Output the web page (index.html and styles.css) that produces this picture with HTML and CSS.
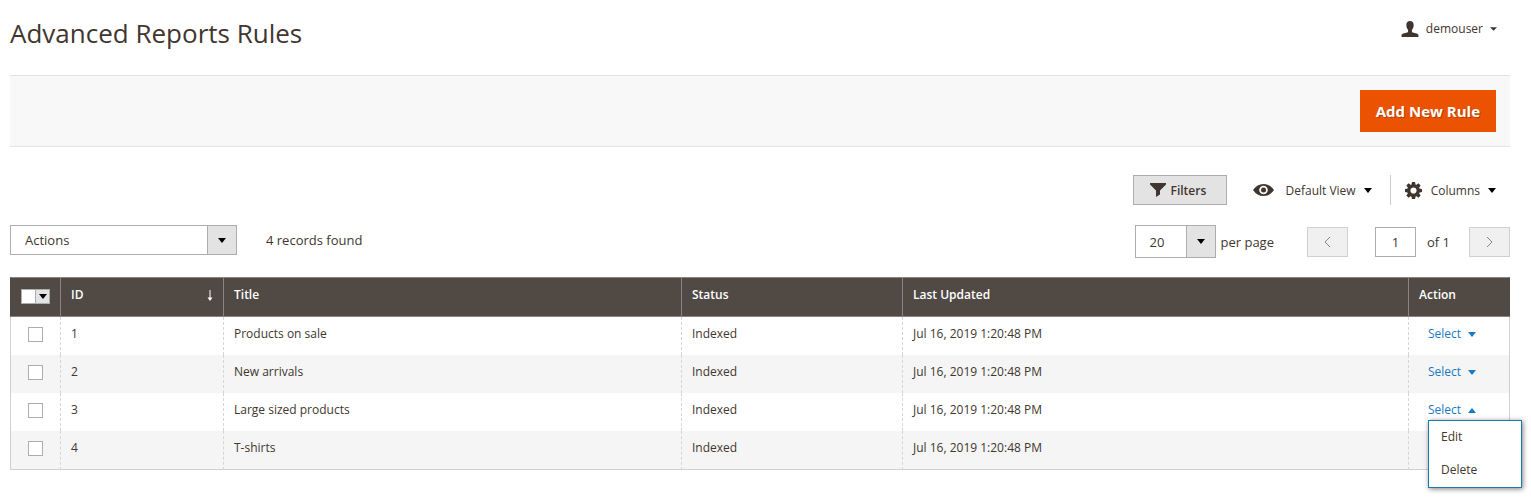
FILE: index.html
```html
<!DOCTYPE html>
<html lang="en">
<head>
    <meta charset="UTF-8">
    <meta name="viewport" content="width=device-width, initial-scale=1.0">
    <title>Advanced Reports Rules</title>
    <link rel="stylesheet" href="styles.css">
</head>
<body>
    <div class="page">
        <header class="page-header">
            <h1>Advanced Reports Rules</h1>
            <button type="button" class="user-menu">
                <svg class="icon-user" viewBox="0 0 18 17" width="18" height="16"><path d="M9 0C6.300 0 5 1.800 5.100 4.300C5.100 6.700 6 8.400 6.900 9.300V11.300C6.600 12.500 1.500 12.700.4 14.200C0 14.800 0 16 0 17H18C18 16 18 14.800 17.600 14.200C16.500 12.700 11.400 12.500 11.100 11.300V9.300C12 8.400 12.900 6.700 12.900 4.300C13 1.800 11.700 0 9 0Z"/></svg>
                <span>demouser</span>
                <svg class="caret-small" viewBox="0 0 8 4" width="7" height="4"><path d="M0 0H8L4 4Z"/></svg>
            </button>
        </header>

        <div class="page-actions">
            <button type="button" class="btn-primary">Add New Rule</button>
        </div>

        <div class="grid-tools">
            <button type="button" class="btn-filters">
                <svg viewBox="0 0 16 14" width="16" height="14"><path d="M0 0H16V1.500L10 7.500V11.500L6 14V7.500L0 1.500Z"/></svg>
                <span>Filters</span>
            </button>
            <button type="button" class="tool view-tool">
                <svg viewBox="0 0 21 12" width="21" height="12"><path fill-rule="evenodd" d="M0 6Q4 0 10.500 0T21 6Q17 12 10.500 12T0 6ZM10.500 1.700A4.300 4.300 0 1 0 10.500 10.300A4.300 4.300 0 1 0 10.500 1.700Z"/><circle cx="10.500" cy="6" r="2.500"/></svg>
                <span>Default View</span>
                <svg class="caret" viewBox="0 0 8 5" width="8" height="5"><path d="M0 0H8L4 5Z"/></svg>
            </button>
            <button type="button" class="tool columns-tool">
                <svg viewBox="-8 -8 16 16" width="17" height="17">
                    <circle r="4.400" fill="none" stroke="#41362f" stroke-width="3"/>
                    <path d="M-2 -5L-1.500 -8H1.500L2 -5ZM-2 5L-1.500 8H1.500L2 5ZM-5 -2L-8 -1.500V1.500L-5 2ZM5 -2L8 -1.500V1.500L5 2Z"/>
                    <path transform="rotate(45)" d="M-2 -5L-1.500 -8H1.500L2 -5ZM-2 5L-1.500 8H1.500L2 5ZM-5 -2L-8 -1.500V1.500L-5 2ZM5 -2L8 -1.500V1.500L5 2Z"/>
                </svg>
                <span>Columns</span>
                <svg class="caret" viewBox="0 0 8 5" width="8" height="5"><path d="M0 0H8L4 5Z"/></svg>
            </button>
        </div>

        <div class="grid-controls">
            <select class="select actions-select" aria-label="Actions">
                <option>Actions</option>
                <option>Delete</option>
            </select>
            <span class="records">4 records found</span>
            <div class="pager">
                <select class="select limit-select" id="per-page">
                    <option>20</option>
                    <option>50</option>
                    <option>100</option>
                </select>
                <label class="per-page" for="per-page">per page</label>
                <button type="button" class="btn-page" aria-label="Previous page" disabled>
                    <svg viewBox="0 0 7 12" width="7" height="12"><path d="M6 1L1 6L6 11"/></svg>
                </button>
                <input type="text" class="page-input" id="page" value="1">
                <label class="page-total" for="page">of 1</label>
                <button type="button" class="btn-page" aria-label="Next page" disabled>
                    <svg viewBox="0 0 7 12" width="7" height="12"><path d="M1 1L6 6L1 11"/></svg>
                </button>
            </div>
        </div>

        <table class="data-grid">
            <colgroup>
                <col class="col-check">
                <col class="col-id">
                <col class="col-title">
                <col class="col-status">
                <col class="col-updated">
                <col class="col-action">
            </colgroup>
            <thead>
                <tr>
                    <th class="check-cell">
                        <div class="multicheck">
                            <input type="checkbox" aria-label="Select all">
                            <button type="button" aria-label="Selection options"><svg viewBox="0 0 8 5" width="8" height="5"><path d="M0 0H8L4 5Z"/></svg></button>
                        </div>
                    </th>
                    <th>
                        <div class="sorted">
                            <span>ID</span>
                            <svg viewBox="0 0 6 11" width="6" height="11"><path d="M2.500 0H3.500V7.500H5.500L3 11L.5 7.500H2.500Z"/></svg>
                        </div>
                    </th>
                    <th>Title</th>
                    <th>Status</th>
                    <th>Last Updated</th>
                    <th>Action</th>
                </tr>
            </thead>
            <tbody>
                <tr>
                    <td class="check-cell"><input type="checkbox" aria-label="Select rule 1"></td>
                    <td>1</td>
                    <td>Products on sale</td>
                    <td>Indexed</td>
                    <td>Jul 16, 2019 1:20:48 PM</td>
                    <td class="action-cell"><button type="button" class="action-select">Select <svg viewBox="0 0 8 5" width="8" height="5"><path d="M0 0H8L4 5Z"/></svg></button></td>
                </tr>
                <tr>
                    <td class="check-cell"><input type="checkbox" aria-label="Select rule 2"></td>
                    <td>2</td>
                    <td>New arrivals</td>
                    <td>Indexed</td>
                    <td>Jul 16, 2019 1:20:48 PM</td>
                    <td class="action-cell"><button type="button" class="action-select">Select <svg viewBox="0 0 8 5" width="8" height="5"><path d="M0 0H8L4 5Z"/></svg></button></td>
                </tr>
                <tr>
                    <td class="check-cell"><input type="checkbox" aria-label="Select rule 3"></td>
                    <td>3</td>
                    <td>Large sized products</td>
                    <td>Indexed</td>
                    <td>Jul 16, 2019 1:20:48 PM</td>
                    <td class="action-cell">
                        <div class="action-wrap">
                            <button type="button" class="action-select" aria-expanded="true">Select <svg viewBox="0 0 8 5" width="8" height="5"><path d="M0 5H8L4 0Z"/></svg></button>
                            <ul class="action-menu">
                                <li><a href="#edit">Edit</a></li>
                                <li><a href="#delete">Delete</a></li>
                            </ul>
                        </div>
                    </td>
                </tr>
                <tr>
                    <td class="check-cell"><input type="checkbox" aria-label="Select rule 4"></td>
                    <td>4</td>
                    <td>T-shirts</td>
                    <td>Indexed</td>
                    <td>Jul 16, 2019 1:20:48 PM</td>
                    <td class="action-cell"><button type="button" class="action-select">Select <svg viewBox="0 0 8 5" width="8" height="5"><path d="M0 0H8L4 5Z"/></svg></button></td>
                </tr>
            </tbody>
        </table>
    </div>
</body>
</html>
```
FILE: styles.css
```css
* {
    box-sizing: border-box;
}

body {
    margin: 0;
    background: #fff;
    color: #41362f;
    font-family: "Open Sans", sans-serif;
    font-size: 13px;
    line-height: 18px;
}

button, input, select {
    margin: 0;
    font: inherit;
    color: inherit;
}

button {
    padding: 0;
    border: none;
    background: none;
    cursor: pointer;
}

svg {
    display: block;
    flex: none;
    fill: #41362f;
}

.page {
    padding: 0 21px 24px 10px;
}

.page-header {
    display: flex;
    justify-content: space-between;
    align-items: flex-start;
    height: 75px;
    padding-top: 15px;
}

h1 {
    margin: 0;
    font-size: 26px;
    font-weight: 400;
    line-height: 36px;
}

.user-menu {
    display: flex;
    align-items: center;
    gap: 7px;
    margin-top: 5px;
    padding-right: 13px;
    font-size: 12px;
}

.page-actions {
    display: flex;
    justify-content: flex-end;
    padding: 14px;
    background: #f8f8f8;
    border-top: 1px solid #e3e3e3;
    border-bottom: 1px solid #e3e3e3;
}

.btn-primary {
    height: 42px;
    padding: 0 16px;
    background: #eb5202;
    color: #fff;
    font-size: 15px;
    font-weight: 700;
    text-shadow: 1px 1px 0 rgba(0, 0, 0, 0.25);
}

/* Toolbar above the grid */
.grid-tools {
    display: flex;
    justify-content: flex-end;
    margin: 28px 0 20px;
    font-size: 12px;
}

.btn-filters {
    display: flex;
    align-items: center;
    gap: 4px;
    width: 94px;
    height: 30px;
    margin-right: 26px;
    padding-left: 16px;
    background: #e3e3e3;
    border: 1px solid #adadad;
    font-weight: 600;
}

.tool {
    display: flex;
    align-items: center;
    height: 30px;
}

.tool span,
.btn-filters span {
    padding-top: 1px;
}

.tool .caret {
    margin-left: 8px;
    fill: #000;
}

.view-tool {
    padding-right: 18px;
}

.view-tool span {
    margin-left: 11px;
}

.columns-tool {
    padding: 0 14px;
    border-left: 1px solid #ccc;
}

.columns-tool span {
    margin-left: 9px;
}

.grid-controls {
    display: flex;
    align-items: flex-start;
    margin-bottom: 19px;
}

.select {
    appearance: none;
    height: 30px;
    padding: 0 40px 0 14px;
    border: 1px solid #adadad;
    border-radius: 0;
    background-color: #fff;
    background-image:
        url("data:image/svg+xml,%3Csvg xmlns='http://www.w3.org/2000/svg' width='8' height='5'%3E%3Cpath d='M0 0H8L4 5Z'/%3E%3C/svg%3E"),
        linear-gradient(#adadad, #adadad),
        linear-gradient(#e3e3e3, #e3e3e3);
    background-repeat: no-repeat;
    background-position: right 10px center, right 28px top, right top;
    background-size: 8px 5px, 1px 100%, 28px 100%;
}

.actions-select {
    width: 227px;
}

.records {
    margin-left: 29px;
    line-height: 30px;
}

.pager {
    display: flex;
    align-items: center;
    margin-left: auto;
}

.limit-select {
    width: 81px;
    height: 33px;
}

.per-page {
    margin: 0 33px 0 5px;
}

.btn-page {
    display: flex;
    align-items: center;
    justify-content: center;
    width: 41px;
    height: 30px;
    background: #f0f0f0;
    border: 1px solid #d0d0d0;
}

.btn-page svg {
    fill: none;
    stroke: #8a8683;
}

.page-input {
    width: 41px;
    height: 30px;
    margin-left: 27px;
    padding: 0;
    border: 1px solid #adadad;
    text-align: center;
}

.page-total {
    margin: 0 19px 0 11px;
}

/* Data grid */
.data-grid {
    width: 100%;
    table-layout: fixed;
    border-collapse: separate;
    border-spacing: 0;
    font-size: 12px;
}

.col-check { width: 50px; }
.col-id { width: 163px; }
.col-title { width: 458px; }
.col-status { width: 221px; }
.col-updated { width: 506px; }
.col-action { width: 102px; }

.data-grid th {
    padding: 8px 10px 12px;
    background: #514943;
    border: 1px solid #8a837f;
    border-width: 1px 0 1px 1px;
    color: #fff;
    font-weight: 600;
    text-align: left;
    vertical-align: top;
}

.data-grid th:first-child {
    border-left-color: #514943;
}

.data-grid th:last-child {
    border-right: 1px solid #514943;
}

.data-grid td {
    padding: 8px 10px 12px;
    border-left: 1px dashed #d6d6d6;
    vertical-align: top;
}

.data-grid td:first-child {
    border-left: 1px solid #d1d1d1;
}

.data-grid td:last-child {
    border-right: 1px solid #d1d1d1;
}

.data-grid tbody tr:nth-child(even) {
    background: #f5f5f5;
}

.data-grid tbody tr:last-child td {
    border-bottom: 1px solid #d1d1d1;
}

.data-grid .check-cell {
    padding: 10px 0 0 17px;
}

.data-grid th.check-cell {
    padding: 11px 0 0 10px;
}

.data-grid input {
    display: block;
    appearance: none;
    width: 15px;
    height: 15px;
    background: #fff;
    border: 1px solid #adadad;
}

.multicheck {
    display: flex;
}

.multicheck button {
    display: flex;
    align-items: center;
    justify-content: center;
    width: 14px;
    height: 15px;
    background: #e3e3e3;
    border: 1px solid #adadad;
    border-left: none;
}

.multicheck svg {
    fill: #000;
}

.sorted {
    display: flex;
    align-items: center;
    justify-content: space-between;
}

.sorted svg {
    fill: #fff;
}

.data-grid .action-cell {
    padding-left: 19px;
}

.action-wrap {
    position: relative;
}

.action-select {
    display: flex;
    align-items: center;
    gap: 7px;
    color: #1979c3;
}

.action-select svg {
    fill: #1979c3;
}

.action-menu {
    position: absolute;
    top: 19px;
    left: 0;
    z-index: 1;
    width: 94px;
    margin: 0;
    padding: 0;
    list-style: none;
    background: #fff;
    border: 1px solid #1a7ab0;
    box-shadow: 1px 1px 5px rgba(0, 0, 0, 0.5);
}

.action-menu a {
    display: block;
    padding: 7px 12px 8px;
    color: #41362f;
    text-decoration: none;
}
```
